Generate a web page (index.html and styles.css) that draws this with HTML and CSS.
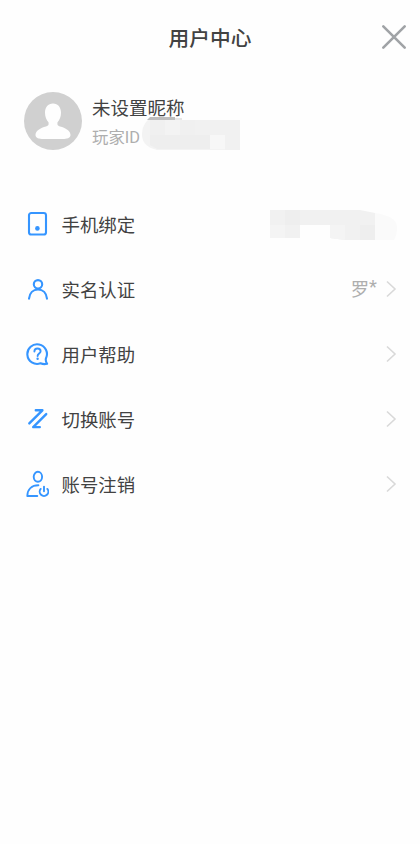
FILE: index.html
```html
<!DOCTYPE html>
<html lang="zh-CN">
<head>
<meta charset="utf-8">
<meta name="viewport" content="width=device-width, initial-scale=1">
<title>用户中心</title>
<link rel="stylesheet" href="styles.css">
</head>
<body>
<main class="page">
  <header class="header">
    <h1 class="title">用户中心</h1>
    <svg class="close" viewBox="0 0 26 26" aria-label="关闭"><path d="M2.3 2.3 23.7 23.7M23.7 2.3 2.3 23.7"/></svg>
  </header>

  <section class="profile">
    <svg class="avatar" viewBox="0 0 58 58">
      <circle cx="29" cy="29" r="29" fill="#d0d0d0"/>
      <path fill="#fefefe" d="M29 11.500c-5 0-8 3.800-8 9.300 0 4.400 1.500 7.300 3.600 9.700V32c0 1.400-1 2-2.600 2.500C16.500 36 11.500 38.500 11.500 43c0 3 3.500 4 8 4h19c4.500 0 8-1 8-4 0-4.500-5-7-10.500-8.500-1.600-.5-2.600-1.100-2.600-2.500v-1.500C35.500 28.100 37 25.200 37 20.800c0-5.500-3-9.300-8-9.300z"/>
    </svg>
    <div class="identity">
      <div class="nickname">未设置昵称</div>
      <div class="player">玩家ID
        <svg class="mask-id" viewBox="0 0 98 33">
          <path fill="#f3f3f3" d="M6 3h92v30H15C6 31 0 26 0 18 0 11 2 7 6 3z"/>
          <path fill="#bdbdbd" d="M8 0h25v3H5z"/>
          <path fill="#e6e6e6" d="M33 1h7v2H33z"/>
          <path fill="#f0f0f0" d="M8 3h15v15H8zM38 3h15v15H38z"/>
          <path fill="#eeeeee" d="M23 18h15v14H23zM38 18h30v14H38zM8 18h15v14h-8l-7-4z"/>
          <path fill="#f1f1f1" d="M53 3h30v15H53zM83 3h15v30H83z"/>
          <path fill="#f7f7f7" d="M68 18h15v14H68z"/>
        </svg>
      </div>
    </div>
  </section>

  <nav class="menu">
    <div class="row">
      <svg class="icon" viewBox="0 0 26 28"><rect x="6" y="3" width="17" height="21.500" rx="2.300"/><circle class="dot" cx="14.400" cy="18.400" r="2.300"/></svg>
      <span class="label">手机绑定</span>
      <svg class="mask-phone" viewBox="0 0 127 30">
        <path fill="#f1f1f1" d="M0 0h90l15 3v27H75l-15-2V15H30v13H0z"/>
        <path fill="#f4f4f4" d="M0 15h15v13H0zM60 15h15v15l-15-2z"/>
        <path fill="#eeeeee" d="M15 0h15v15H15zM90 15h15v15H90z"/>
        <path fill="#fafafa" d="M105 3c13 2 22 6 22 14 0 6-1 10-3 13h-19z"/>
      </svg>
    </div>
    <div class="row">
      <svg class="icon" viewBox="0 0 26 28"><circle cx="15" cy="9.300" r="4.200"/><path d="M6 23.700c.6-5.600 4-9.200 9-9.200s8.400 3.600 9 9.200"/></svg>
      <span class="label">实名认证</span>
      <span class="value">罗<span class="star">*</span></span>
      <svg class="chevron" viewBox="0 0 12 18"><path d="M2 1.500 10 9l-8 7.500"/></svg>
    </div>
    <div class="row">
      <svg class="icon" viewBox="0 0 26 28"><path d="M17.500 23.300A9.800 9.800 0 1 1 22.900 18.500c-.4 1.700 0 3.500 1.200 5.300-2.300.5-4.400.4-6.600-.5z"/><path class="thin" d="M11.400 11.500c0-2 1.300-3 3.100-3s3.100 1 3.100 2.700c0 2.300-3 2.500-3 4.800"/><circle class="dot" cx="14.600" cy="18.700" r="1.200"/></svg>
      <span class="label">用户帮助</span>
      <svg class="chevron" viewBox="0 0 12 18"><path d="M2 1.500 10 9l-8 7.500"/></svg>
    </div>
    <div class="row">
      <svg class="icon switch" viewBox="0 0 26 28"><path d="M12.800 5.300h6.600L6.300 18.400M23.200 9.100 10.200 22.100h6.600"/></svg>
      <span class="label">切换账号</span>
      <svg class="chevron" viewBox="0 0 12 18"><path d="M2 1.500 10 9l-8 7.500"/></svg>
    </div>
    <div class="row">
      <svg class="icon" viewBox="0 0 26 28"><g class="thin"><ellipse cx="14.900" cy="6.800" rx="4.200" ry="5"/><path d="M15.400 15.300C8.800 15.300 4.400 19.300 4.300 26H14.300M17.700 18.900a4.300 4.300 0 1 0 6.600 0M21 16.600v4.600"/></g></svg>
      <span class="label">账号注销</span>
      <svg class="chevron" viewBox="0 0 12 18"><path d="M2 1.500 10 9l-8 7.500"/></svg>
    </div>
  </nav>
</main>
</body>
</html>
```
FILE: styles.css
```css
* { box-sizing: border-box; }

body {
  margin: 0;
  background: #fefefe;
  color: #424242;
  font-family: "Noto Sans CJK SC", sans-serif;
}

svg { display: block; flex: none; }

.page { min-height: 844px; }

.header {
  display: grid;
  grid-template-columns: 1fr auto 1fr;
  align-items: center;
  height: 74px;
  padding-right: 13px;
  padding-left: 13px;
}

.title {
  grid-column: 2;
  margin: 0 0 1px;
  font-size: 20.7px;
  font-weight: 500;
  line-height: 30px;
}

.close {
  width: 26px;
  height: 26px;
  justify-self: end;
  fill: none;
  stroke: #a0a3a6;
  stroke-width: 2.6;
  stroke-linecap: round;
}

.profile {
  display: flex;
  gap: 10px;
  height: 114px;
  padding: 18px 24px 0;
}

.avatar { width: 58px; height: 58px; }

.nickname {
  height: 30px;
  font-size: 18.5px;
  line-height: 30px;
}

.player {
  position: relative;
  height: 30px;
  color: #aeaeae;
  font-family: Roboto, "Noto Sans CJK SC", sans-serif;
  font-size: 16.4px;
  line-height: 31px;
}

.mask-id {
  position: absolute;
  top: -5px;
  left: 50px;
  width: 98px;
  height: 33px;
}

.menu { padding: 3px 23px 0 24px; }

.row {
  display: flex;
  align-items: center;
  height: 65px;
}

.icon {
  width: 26px;
  height: 28px;
  margin-right: 12px;
  margin-left: -1px;
  fill: none;
  stroke: #3595ff;
  stroke-width: 2.1;
  stroke-linecap: round;
  stroke-linejoin: round;
}

.icon .dot { fill: #3595ff; stroke: none; }
.icon .thin { stroke-width: 1.9; }
.switch { stroke-width: 2.4; }

.label {
  flex: 1;
  margin-left: 0.5px;
  font-size: 18.4px;
  line-height: 28px;
}

.value {
  margin-top: 3px;
  margin-right: 8px;
  color: #aeaeae;
  font-family: Roboto, "Noto Sans CJK SC", sans-serif;
  font-size: 18.4px;
  line-height: 28px;
}

.star {
  line-height: 1;
  vertical-align: 3px;
}

.chevron {
  width: 12px;
  height: 18px;
  fill: none;
  stroke: #d9d9d9;
  stroke-width: 1.6;
}

.mask-phone {
  width: 127px;
  height: 30px;
  margin-top: 2px;
}
```
